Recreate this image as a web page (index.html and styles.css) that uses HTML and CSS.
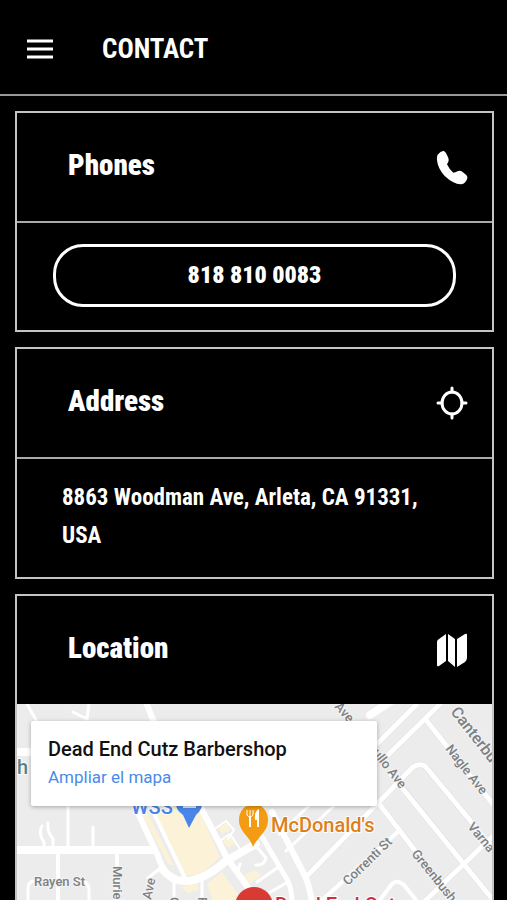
FILE: index.html
```html
<!DOCTYPE html>
<html lang="en">
<head>
<meta charset="utf-8">
<meta name="viewport" content="width=device-width, initial-scale=1">
<title>Contact</title>
<link rel="stylesheet" href="styles.css">
</head>
<body>
<header class="topbar">
  <button class="menu" type="button" aria-label="Menu">
    <svg width="28" height="20" viewBox="0 0 28 20"><path d="M1 2h26M1 10h26M1 18h26" stroke="#fff" stroke-width="3"/></svg>
  </button>
  <h1 class="page-title">CONTACT</h1>
</header>
<main class="content">
  <section class="card">
    <div class="card-head">
      <h2>Phones</h2>
      <svg class="icon" viewBox="0 0 96 105" preserveAspectRatio="none"><path fill="#fff" d="M5 14Q14 2 23 3Q28 4 34 17Q40 27 37 35L33 43Q39 57 52 68L58 67Q69 59 77 64L90 74Q97 80 92 90Q84 104 74 103Q52 102 26 78Q5 55 3 30Q2 19 5 14Z"/></svg>
    </div>
    <div class="card-body phone-body">
      <a class="phone" href="tel:8188100083">818 810 0083</a>
    </div>
  </section>
  <section class="card">
    <div class="card-head">
      <h2>Address</h2>
      <svg class="icon" viewBox="0 0 32 35" fill="none" stroke="#fff" stroke-width="3" stroke-linecap="round"><ellipse cx="16" cy="17" rx="10" ry="11"/><path d="M16 2v4M16 28v4M2 17h4M26 17h4"/></svg>
    </div>
    <div class="card-body address-body">
      <p class="address">8863 Woodman Ave, Arleta, CA 91331, USA</p>
    </div>
  </section>
  <section class="card card-map">
    <div class="card-head">
      <h2>Location</h2>
      <svg class="icon" viewBox="0 0 32 35" fill="#fff"><path d="M1 9Q1 7 3 6L10 1V28L3 33Q1 34 1 32ZM12 1L19 6V34L12 28ZM21 6L29 1Q31 0 31 2V25Q31 27 29 29L21 34Z"/></svg>
    </div>
    <div class="map">
      <svg class="map-art" viewBox="17 704 475 196" preserveAspectRatio="xMinYMin slice" aria-label="Map">
        <rect x="17" y="704" width="475" height="196" fill="#ececed"/>
        <g fill="#fbf2d7">
          <path d="M148 805H197L220 857L202 874L186 876L160 826Z"/>
          <path d="M140 810L146 810L174 866L168 864Z"/>
          <path d="M180 887L198 884V890L188 893ZM207 884L222 872L242 900H213ZM243 876L254 870L261 875L246 887Z"/>
          <path d="M218 828L226 823L231 830L222 834ZM222 841L230 836L235 844L228 848Z"/>
        </g>
        <g fill="none" stroke="#dedfe1" stroke-linejoin="round" stroke-width="6">
          <path d="M378 743L416 705M386 757L440 704M426 720L492 803M396 780L493 900M306 877L413 767Q419 763 425 766L492 847M380 805L453 900M426 900L492 837"/>
        </g>
        <g fill="none" stroke="#fff" stroke-linejoin="round" stroke-linecap="round">
          <path stroke-width="8" d="M14 850H152M14 752H31M370 715L390 702M162 869Q172 881 184 881Q202 882 226 861L256 844"/>
          <path stroke-width="6" d="M132 800L158 856Q161 867 168 874M197 800L227 858L254 896M272 812L304 874Q309 884 312 902M145 700L154 722"/>
          <path stroke-width="5" d="M378 743L416 705M386 757L440 704M426 720L492 803M390 773L493 900M306 877L413 767Q419 763 425 766L492 847M380 805L453 900M426 900L492 837M258 830L288 881Q292 890 292 902"/>
          <path stroke-width="4" d="M320 902L400 830M380 900L392 884Q397 879 404 885L416 900M149 803L184 876M58 851V900M117 851V900"/>
          <path stroke-width="3" d="M286 851L337 803M279 834L312 803M257 882L280 866M267 894L288 882M68 803V850M93 827V850M42 826Q38 834 44 842L44 850M48 823Q47 832 53 839V850M73 712L87 719L89 703M27 704L36 720M28 902V888Q28 881 35 881M80 881Q88 881 89 889V902M148 878L158 870M174 882V900M202 880V900M256 846L266 858Q264 866 256 865M240 864L237 874L242 878"/>
          <path stroke-width="2" d="M216 828L226 821L234 830L228 839M221 840L230 834L240 849"/>
        </g>
        <g class="street">
          <text x="34" y="886">Rayen St</text>
          <text transform="translate(113 866) rotate(90)">Muriel</text>
          <text transform="translate(151 900) rotate(-78)">Ave</text>
          <text transform="translate(334 707) rotate(48)">Ave</text>
          <text transform="translate(372 753) rotate(52)">ullo Ave</text>
          <text transform="translate(445 749) rotate(52)">Nagle Ave</text>
          <text transform="translate(467 827) rotate(50)">Varna</text>
          <text transform="translate(411 854) rotate(51)">Greenbush</text>
          <text transform="translate(348 886) rotate(-44)">Correnti St</text>
          <text transform="translate(170 897) rotate(90)">C</text>
          <text transform="translate(198 897) rotate(90)">F</text>
          <text class="street-major" transform="translate(450 712) rotate(52)">Canterbu</text>
        </g>
        <text class="place teal" x="5" y="774">Sh</text>
        <text class="place blue" x="131" y="814">WSS</text>
        <path fill="#4a86ea" d="M176 800H203Q203 809 196 815L189 828L183 815Q176 810 176 804Z"/>
        <path fill="#dbe8fc" d="M183 802H196V808H183Z"/>
        <path fill="#f29b13" d="M254 804C245 804 239 811 239 820C239 832 250 836 253 847C258 836 268 832 268 820C268 811 262 804 254 804Z"/>
        <path fill="none" stroke="#fff" stroke-width="2" d="M250 816V827M258 827V810"/>
        <path fill="none" stroke="#fff" stroke-width="1" d="M247 810V815Q250 819 253 815V810M250 810V817"/>
        <path fill="#fff" d="M259 809V820H255Q254 811 259 809Z"/>
        <circle cx="254" cy="906" r="19" fill="#d93a34"/>
        <text class="place orange" x="271" y="832">McDonald's</text>
        <text class="place red" x="275" y="912">Dead End Cutz</text>
      </svg>
      <div class="place-card">
        <h3>Dead End Cutz Barbershop</h3>
        <a href="#map">Ampliar el mapa</a>
      </div>
    </div>
  </section>
</main>
</body>
</html>
```
FILE: styles.css
```css
* {
  box-sizing: border-box;
}

body {
  display: flex;
  flex-direction: column;
  height: 100vh;
  margin: 0;
  overflow: hidden;
  background: #000;
  color: #fff;
  font-family: "Roboto Condensed", Roboto, sans-serif;
  font-weight: 900;
}

h1,
h2,
h3,
p {
  margin: 0;
}

.topbar {
  display: flex;
  flex: none;
  align-items: center;
  gap: 48px;
  height: 96px;
  padding: 4px 26px 0;
  border-bottom: 2px solid #999;
}

.menu {
  display: flex;
  padding: 0;
  border: 0;
  background: none;
}

.page-title {
  font-size: 27px;
  font-weight: 700;
  line-height: 32px;
}

.content {
  display: flex;
  flex: 1;
  flex-direction: column;
  gap: 15px;
  min-height: 0;
  padding: 15px 13px 0 15px;
}

.card {
  flex: none;
  border: 2px solid #c4c4c4;
}

.card-head {
  display: flex;
  align-items: center;
  justify-content: space-between;
  height: 108px;
  padding: 0 24px 0 51px;
}

.card-head h2 {
  padding-bottom: 4px;
  font-size: 29px;
  font-weight: 900;
  line-height: 36px;
}

.icon {
  width: 32px;
  height: 35px;
}

.card-body {
  border-top: 2px solid #aaa;
}

.phone-body {
  padding: 21px 36px 23px;
}

.phone {
  display: block;
  padding: 12px 0 13px;
  border: 3px solid #fff;
  border-radius: 30px;
  color: #fff;
  font-size: 24px;
  line-height: 32px;
  text-align: center;
  text-decoration: none;
}

.address-body {
  padding: 20px 45px 22px;
}

.address {
  font-size: 23px;
  font-weight: 700;
  line-height: 38px;
}

.card-map {
  display: flex;
  flex: 1;
  flex-direction: column;
  min-height: 0;
  border-bottom: 0;
}

.card-map .card-head {
  flex: none;
}

.map {
  position: relative;
  flex: 1;
  min-height: 0;
  overflow: hidden;
  font-family: Roboto, sans-serif;
}

.map-art {
  display: block;
  width: 100%;
  height: 100%;
}

.street {
  fill: #7d8083;
  stroke: #f4f4f4;
  stroke-width: 2px;
  paint-order: stroke;
  font-size: 13px;
  font-weight: 500;
}

.street-major {
  font-size: 16px;
}

.place {
  stroke: #fff;
  stroke-width: 2px;
  paint-order: stroke;
  font-size: 20px;
  font-weight: 500;
}

.teal {
  fill: #5b7f83;
}

.blue {
  fill: #4a86ea;
}

.orange {
  fill: #dc7f20;
}

.red {
  fill: #cf2f35;
}

.place-card {
  position: absolute;
  top: 17px;
  left: 14px;
  width: 346px;
  max-width: 90%;
  padding: 14px 17px 15px;
  border-radius: 2px;
  background: #fff;
  box-shadow: 0 1px 4px rgba(0, 0, 0, 0.3);
}

.place-card h3 {
  color: #111;
  font-size: 20px;
  font-weight: 500;
  line-height: 28px;
}

.place-card a {
  display: block;
  color: #4a8ae8;
  font-size: 17px;
  font-weight: 400;
  line-height: 28px;
  text-decoration: none;
}
```
